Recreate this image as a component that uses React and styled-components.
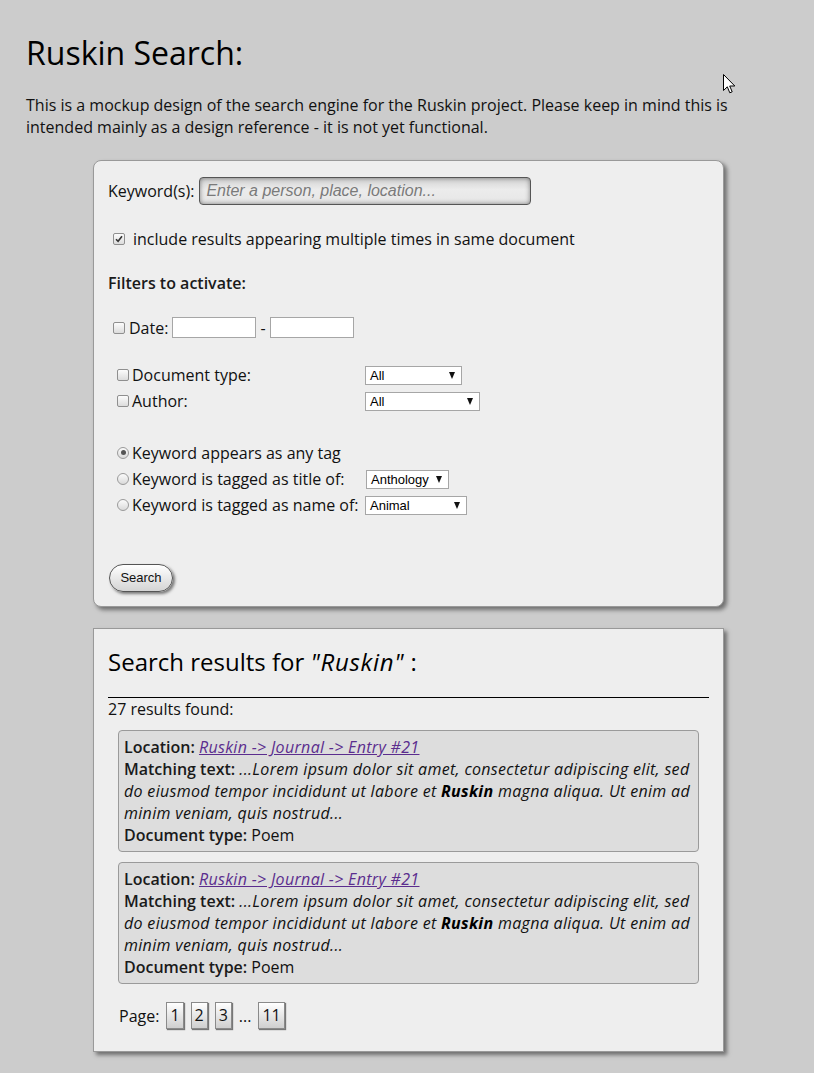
import React from 'react';
import styled, { createGlobalStyle } from 'styled-components';

const Global = createGlobalStyle`
  html, body { margin: 0; padding: 0; background: #cccccc; }
  body { font-family: "Open Sans", sans-serif; color: #111; font-size: 16px; }
`;

const Page = styled.div`
  position: relative;
  padding: 31px 26px 20px 26px;
`;

const Title = styled.h1`
  margin: 0;
  font-size: 32px;
  line-height: 44px;
  font-weight: 400;
  color: #000;
`;

const Intro = styled.p`
  margin: 20px 0 21px;
  font-size: 16px;
  line-height: 21.8px;
`;

const Panel = styled.section`
  box-sizing: border-box;
  width: 631px;
  margin: ${p => p.$mt || 0}px 0 0 67px;
  background: #eeeeee;
  border: 1px solid #999;
  border-radius: ${p => (p.$rounded ? '8px' : '0')};
  box-shadow: 3px 3px 4px #6f6f6f;
  padding: ${p => p.$pad};
`;

const Row = styled.div`
  display: flex;
  align-items: center;
  height: ${p => p.$h || 22}px;
  margin-top: ${p => p.$mt || 0}px;
  padding-left: ${p => p.$indent || 0}px;
  font-size: 16px;
  line-height: 22px;
`;

const Label = styled.span`
  display: inline-block;
  width: ${p => (p.$w ? `${p.$w}px` : 'auto')};
  white-space: nowrap;
`;

const Heading = styled.div`
  font-weight: 600;
  color: #1a1a1a;
`;

const KeywordInput = styled.input`
  box-sizing: border-box;
  width: 332px;
  height: 28px;
  margin-left: 5px;
  border: 1px solid #555;
  border-radius: 4px;
  background: linear-gradient(#d2d2d2, #ececec 45%, #e6e6e6);
  box-shadow: inset 0 0 5px rgba(0, 0, 0, 0.45);
  padding: 0 6px;
  font-family: "Liberation Sans", Arial, sans-serif;
  font-size: 16px;
  font-style: italic;
  color: #333;
  outline: none;
  &::placeholder { color: #7a7a7a; }
`;

const Check = styled.span`
  box-sizing: border-box;
  display: inline-flex;
  align-items: center;
  justify-content: center;
  width: 12px;
  height: 12px;
  flex: none;
  border: 1px solid #8f8f8f;
  border-radius: 2px;
  background: linear-gradient(#fcfcfc, #dcdcdc);
  margin-right: ${p => p.$mr || 0}px;
`;

const Radio = styled.span`
  box-sizing: border-box;
  display: inline-flex;
  align-items: center;
  justify-content: center;
  width: 12px;
  height: 12px;
  flex: none;
  border: 1px solid #9a9a9a;
  border-radius: 50%;
  background: linear-gradient(#fbfbfb, #dadada);
  margin-right: 3px;
  &::after {
    content: '';
    display: ${p => (p.$on ? 'block' : 'none')};
    width: 5px;
    height: 5px;
    border-radius: 50%;
    background: #555;
  }
`;

const DateField = styled.span`
  box-sizing: border-box;
  display: inline-block;
  width: 84px;
  height: 21px;
  background: #fff;
  border: 1px solid #a6a6a6;
  margin-left: ${p => p.$ml || 0}px;
`;

const Dash = styled.span`
  margin: 0 4px;
`;

const SelectBox = styled.span`
  box-sizing: border-box;
  display: inline-flex;
  align-items: center;
  justify-content: space-between;
  width: ${p => p.$w}px;
  height: 19px;
  margin-top: 2px;
  background: #fff;
  border: 1px solid #a6a6a6;
  padding: 0 6px 0 4px;
  font-family: "Liberation Sans", Arial, sans-serif;
  font-size: 13px;
  color: #000;
`;

const Arrow = styled.span`
  width: 0;
  height: 0;
  border-left: 3.5px solid transparent;
  border-right: 3.5px solid transparent;
  border-top: 7px solid #111;
`;

const SearchButton = styled.button`
  box-sizing: border-box;
  width: 64px;
  height: 28px;
  margin-left: 1px;
  border: 1px solid #555;
  border-radius: 14px;
  background: linear-gradient(#ffffff, #e9e9e9 50%, #d4d4d4);
  box-shadow: 2px 2px 3px #7a7a7a;
  font-family: "Liberation Sans", Arial, sans-serif;
  font-size: 13px;
  color: #111;
  padding: 0;
`;

const ResultsTitle = styled.h2`
  margin: 0;
  font-size: 24px;
  line-height: 32.7px;
  font-weight: 400;
  color: #000;
  em { font-style: italic; letter-spacing: 0.03em; }
`;

const Rule = styled.hr`
  margin: 19px 0 0;
  border: 0;
  border-top: 1px solid #000;
  height: 0;
`;

const Count = styled.div`
  line-height: 22px;
`;

const Card = styled.div`
  margin: 10px 10px 0;
  padding: 5px;
  background: #dddddd;
  border: 1px solid #9a9a9a;
  border-radius: 4px;
  line-height: 22px;
  color: #111;
`;

const Key = styled.span`
  font-weight: 600;
  color: #1a1a1a;
`;

const Link = styled.a`
  color: #5b2d8e;
  font-style: italic;
  letter-spacing: 0.02em;
  text-decoration: underline;
`;

const Snippet = styled.span`
  font-style: italic;
  letter-spacing: 0.02em;
  b { font-weight: 700; color: #000; }
`;

const Pager = styled.div`
  display: flex;
  align-items: center;
  gap: 7px;
  height: 27px;
  margin-top: 18px;
  padding-left: 11px;
`;

const PageBox = styled.span`
  box-sizing: border-box;
  height: 27px;
  line-height: 25px;
  padding: 0 3px;
  border: 1px solid #8a8a8a;
  background: linear-gradient(#ffffff, #cfcfcf);
  box-shadow: 1px 1px 1px #777;
`;

const Cursor = styled.svg`
  position: absolute;
  left: 723px;
  top: 74px;
`;

const CheckMark = () => (
  <svg width="8" height="8" viewBox="0 0 8 8">
    <path d="M1 4.2 L3.1 6.3 L7 1.3" fill="none" stroke="#333" strokeWidth="1.6" />
  </svg>
);

const Result = () => (
  <Card>
    <div>
      <Key>Location: </Key>
      <Link href="#">Ruskin -&gt; Journal -&gt; Entry #21</Link>
    </div>
    <div>
      <Key>Matching text: </Key>
      <Snippet>
        ...Lorem ipsum dolor sit amet, consectetur adipiscing elit, sed do eiusmod tempor incididunt ut labore et{' '}
        <b>Ruskin</b> magna aliqua. Ut enim ad minim veniam, quis nostrud...
      </Snippet>
    </div>
    <div>
      <Key>Document type:</Key> Poem
    </div>
  </Card>
);

export default function App() {
  return (
    <>
      <Global />
      <Page>
        <Title>Ruskin Search:</Title>
        <Intro>
          This is a mockup design of the search engine for the Ruskin project. Please keep in mind this is intended
          mainly as a design reference - it is not yet functional.
        </Intro>

        <Panel $rounded $pad="16px 14px 14px">
          <Row $h={28}>
            <Label>Keyword(s):</Label>
            <KeywordInput placeholder="Enter a person, place, location..." />
          </Row>
          <Row $mt={23} $indent={5}>
            <Check $mr={8}><CheckMark /></Check>
            <Label>include results appearing multiple times in same document</Label>
          </Row>
          <Row $mt={22}>
            <Heading>Filters to activate:</Heading>
          </Row>
          <Row $mt={23} $indent={5}>
            <Check $mr={4} />
            <Label>Date:</Label>
            <DateField $ml={4} />
            <Dash>-</Dash>
            <DateField />
          </Row>
          <Row $mt={25} $indent={9}>
            <Check $mr={3} />
            <Label $w={233}>Document type:</Label>
            <SelectBox $w={97}>All<Arrow /></SelectBox>
          </Row>
          <Row $mt={4} $indent={9}>
            <Check $mr={3} />
            <Label $w={233}>Author:</Label>
            <SelectBox $w={115}>All<Arrow /></SelectBox>
          </Row>
          <Row $mt={30} $indent={9}>
            <Radio $on />
            <Label>Keyword appears as any tag</Label>
          </Row>
          <Row $mt={4} $indent={9}>
            <Radio />
            <Label $w={234}>Keyword is tagged as title of:</Label>
            <SelectBox $w={83}>Anthology<Arrow /></SelectBox>
          </Row>
          <Row $mt={4} $indent={9}>
            <Radio />
            <Label $w={233}>Keyword is tagged as name of:</Label>
            <SelectBox $w={102}>Animal<Arrow /></SelectBox>
          </Row>
          <Row $mt={48} $h={28}>
            <SearchButton>Search</SearchButton>
          </Row>
        </Panel>

        <Panel $mt={21} $pad="17px 14px 22px">
          <ResultsTitle>
            Search results for <em>"Ruskin"</em> :
          </ResultsTitle>
          <Rule />
          <Count>27 results found:</Count>
          <Result />
          <Result />
          <Pager>
            <span>Page:</span>
            <PageBox>1</PageBox>
            <PageBox>2</PageBox>
            <PageBox>3</PageBox>
            <span>...</span>
            <PageBox>11</PageBox>
          </Pager>
        </Panel>

        <Cursor width="13" height="21" viewBox="0 0 13 21">
          <path d="M0.5 0.5 L0.5 16.5 L4.3 12.8 L6.8 18.8 L9.2 17.8 L6.7 12 L11.8 12 Z" fill="#fff" stroke="#000" strokeWidth="1" strokeLinejoin="round" />
        </Cursor>
      </Page>
    </>
  );
}
